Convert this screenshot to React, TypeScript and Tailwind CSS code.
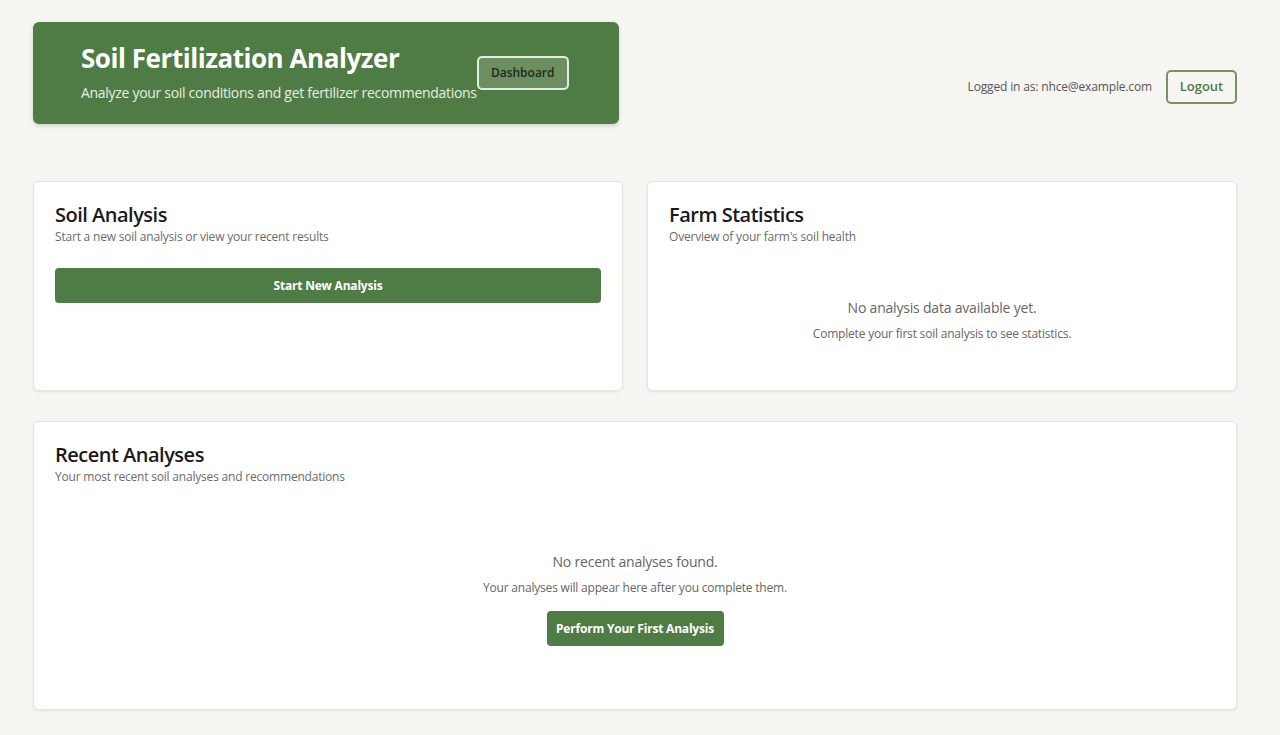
import React from "react";

const font = { fontFamily: '"Open Sans", "Noto Sans", sans-serif' };

const Card = ({
  title,
  subtitle,
  className = "",
  children,
}: {
  title: string;
  subtitle: string;
  className?: string;
  children?: React.ReactNode;
}) => (
  <div
    className={`bg-white rounded-md border border-[#e6e4df] shadow-[0_1px_3px_rgba(0,0,0,0.08)] px-[21px] pt-[19px] pb-5 flex flex-col ${className}`}
  >
    <h2 className="text-[20px] leading-[28px] font-semibold text-[#1a1a1a] tracking-[-0.5px]">{title}</h2>
    <p className="text-[12px] leading-[16px] text-[#6b6b6b] tracking-[-0.2px]">{subtitle}</p>
    {children}
  </div>
);

export default function App() {
  return (
    <div className="min-h-[735px] bg-[#f6f5f1] pl-[33px] pr-[43px] pt-[22px] pb-6" style={font}>
      {/* Header */}
      <div className="flex items-center justify-between">
        <div className="flex items-center bg-[#4f7b44] rounded-md shadow-[0_2px_4px_rgba(0,0,0,0.15)] pl-12 pr-[50px] h-[102px]">
          <div className="pb-[3px]">
            <h1 className="text-[26px] leading-[34px] font-bold text-white tracking-[-0.45px]">
              Soil Fertilization Analyzer
            </h1>
            <p className="text-[14px] leading-[20px] text-[#e8efe5] mt-[8px] tracking-[-0.3px]">
              Analyze your soil conditions and get fertilizer recommendations
            </p>
          </div>
          <button className="self-start mt-[34px] w-[92px] h-[34px] rounded-[5px] border-2 border-[#e4ebe1] bg-[#6c8f62] text-[12px] font-semibold text-[#1f2a1b]">
            Dashboard
          </button>
        </div>
        <div className="flex items-center gap-[14px] mt-[27px]">
          <span className="text-[12px] text-[#555] tracking-[-0.15px]">Logged in as: nhce@example.com</span>
          <button className="w-[71px] h-[34px] rounded-[5px] border-2 border-[#6f9466] text-[13px] font-semibold text-[#4f7b44] bg-transparent">
            Logout
          </button>
        </div>
      </div>

      {/* Top cards */}
      <div className="grid grid-cols-2 gap-6 mt-[57px]">
        <Card title="Soil Analysis" subtitle="Start a new soil analysis or view your recent results" className="h-[210px]">
          <button className="mt-[23px] h-[35px] w-full rounded-[4px] bg-[#4f7b44] text-white text-[12px] font-bold tracking-[-0.2px]">
            Start New Analysis
          </button>
        </Card>
        <Card title="Farm Statistics" subtitle="Overview of your farm's soil health" className="h-[210px]">
          <div className="flex flex-col items-center mt-[53px] text-center">
            <p className="text-[14px] leading-[20px] text-[#666] tracking-[-0.2px]">No analysis data available yet.</p>
            <p className="text-[12px] leading-[16px] text-[#666] mt-[8px] tracking-[-0.2px]">
              Complete your first soil analysis to see statistics.
            </p>
          </div>
        </Card>
      </div>

      {/* Recent */}
      <Card
        title="Recent Analyses"
        subtitle="Your most recent soil analyses and recommendations"
        className="h-[289px] mt-[30px]"
      >
        <div className="flex flex-col items-center mt-[67px] text-center">
          <p className="text-[14px] leading-[20px] text-[#666] tracking-[-0.2px]">No recent analyses found.</p>
          <p className="text-[12px] leading-[16px] text-[#666] mt-[8px] tracking-[-0.2px]">
            Your analyses will appear here after you complete them.
          </p>
          <button className="mt-[15px] w-[177px] h-[35px] rounded-[4px] bg-[#4f7b44] text-white text-[12px] font-bold tracking-[-0.2px]">
            Perform Your First Analysis
          </button>
        </div>
      </Card>
    </div>
  );
}
